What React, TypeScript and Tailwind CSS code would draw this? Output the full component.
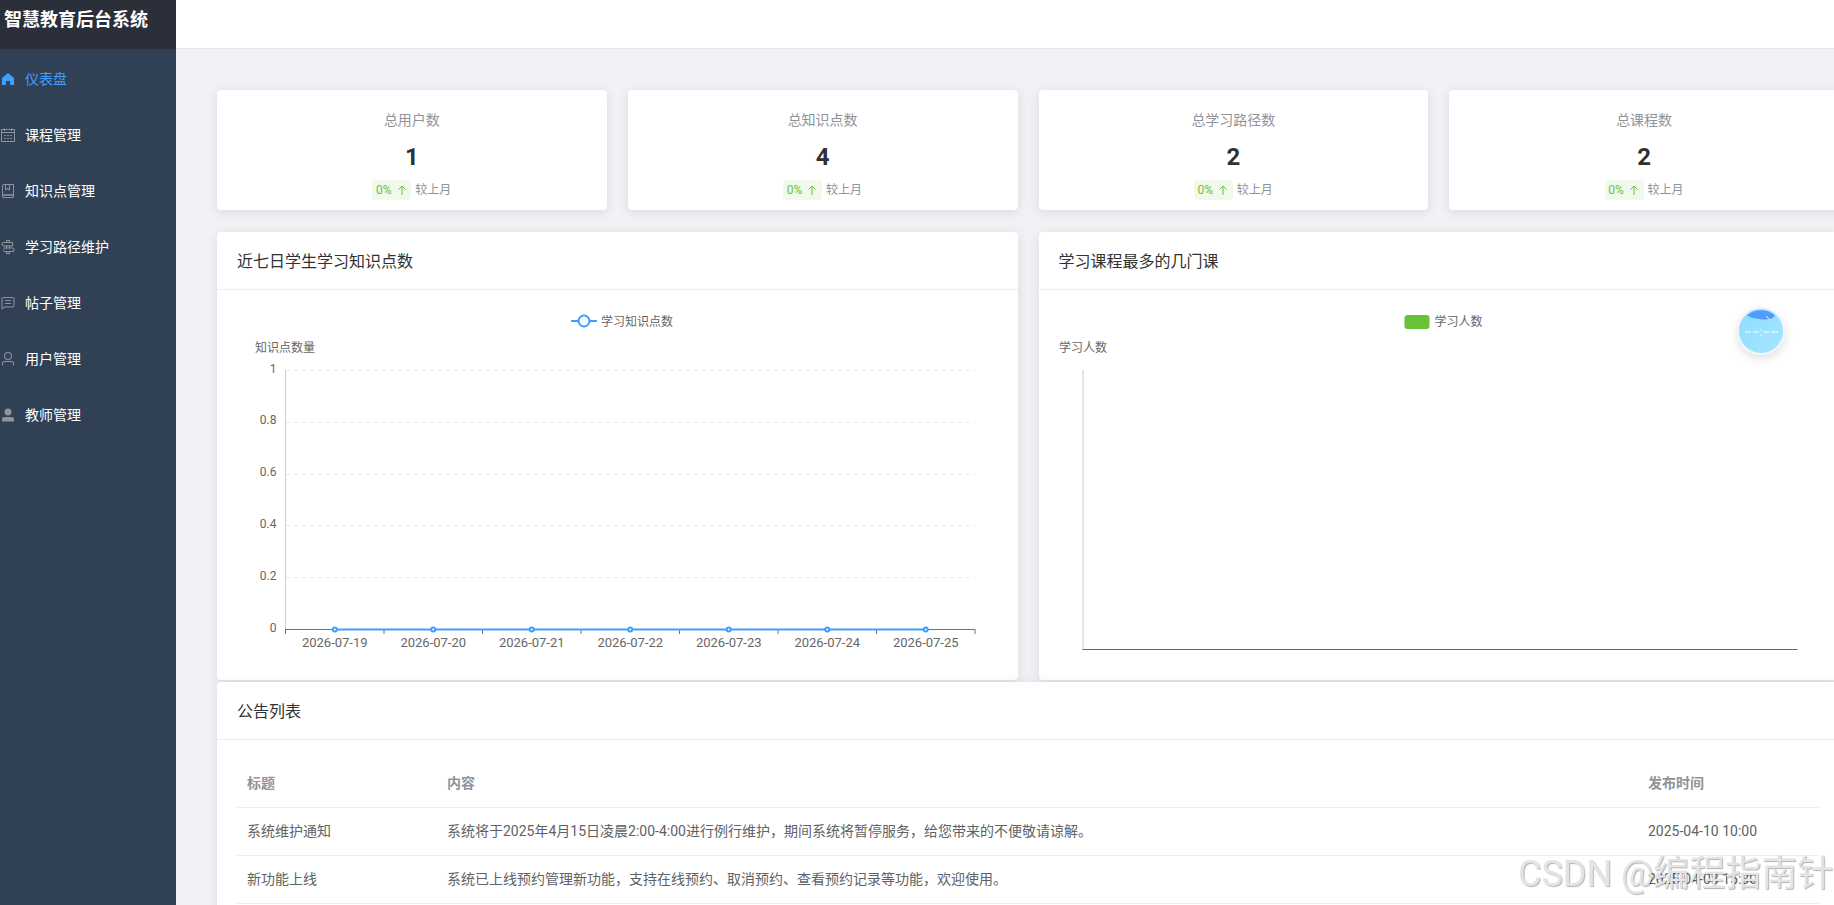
const FONT = { fontFamily: 'Roboto, "Noto Sans CJK SC", sans-serif' };

const ICONS: Record<string, string[]> = {
  home: ["M512 128 128 447.936V896h255.936V640H640v256h255.936V447.936z"],
  calendar: [
    "M128 384v512h768V192H768v32a32 32 0 1 1-64 0v-32H320v32a32 32 0 0 1-64 0v-32H128v128h768v64H128zm192-256h384V96a32 32 0 1 1 64 0v32h160a32 32 0 0 1 32 32v768a32 32 0 0 1-32 32H96a32 32 0 0 1-32-32V160a32 32 0 0 1 32-32h160V96a32 32 0 0 1 64 0v32zm-32 384h64a32 32 0 0 1 0 64h-64a32 32 0 0 1 0-64zm0 192h64a32 32 0 1 1 0 64h-64a32 32 0 1 1 0-64zm192-192h64a32 32 0 0 1 0 64h-64a32 32 0 0 1 0-64zm0 192h64a32 32 0 1 1 0 64h-64a32 32 0 1 1 0-64zm192-192h64a32 32 0 1 1 0 64h-64a32 32 0 1 1 0-64zm0 192h64a32 32 0 1 1 0 64h-64a32 32 0 1 1 0-64z",
  ],
  collection: [
    "M192 736h640V128H256a64 64 0 0 0-64 64v544zm64-672h608a32 32 0 0 1 32 32v672a32 32 0 0 1-32 32H160l-32 57.536V192A128 128 0 0 1 256 64z",
    "M240 800a48 48 0 1 0 0 96h592v-96H240zm0-64h656v160a64 64 0 0 1-64 64H240a112 112 0 0 1 0-224zm144-608v250.88l96-76.8 96 76.8V128H384zm-64-64h320v381.44a32 32 0 0 1-51.968 24.96L480 384l-108.032 86.4A32 32 0 0 1 320 445.44V64z",
  ],
  guide: [
    "M640 608h-64V416h64v192zm0 160v160a32 32 0 0 1-32 32H416a32 32 0 0 1-32-32V768h64v128h128V768h64zM384 608V416h64v192h-64zm256-352h-64V128H448v128h-64V96a32 32 0 0 1 32-32h192a32 32 0 0 1 32 32v160z",
    "m220.8 256-71.232 80 71.168 80H768V256H220.8zm-14.4-64H800a32 32 0 0 1 32 32v224a32 32 0 0 1-32 32H206.4a32 32 0 0 1-23.936-10.752l-99.584-112a32 32 0 0 1 0-42.496l99.584-112A32 32 0 0 1 206.4 192zm678.784 496-71.104 80H266.816V608h547.2l71.168 80zm-56.768-144H234.88v288h593.6a32 32 0 0 0 23.936-10.752l99.584-112a32 32 0 0 0 0-42.496l-99.584-112A32 32 0 0 0 828.48 544z",
  ],
  chat: [
    "M160 826.88 273.536 736H800a64 64 0 0 0 64-64V256a64 64 0 0 0-64-64H224a64 64 0 0 0-64 64v570.88zM296 800 147.968 918.4A32 32 0 0 1 96 893.44V256a128 128 0 0 1 128-128h576a128 128 0 0 1 128 128v416a128 128 0 0 1-128 128H296z",
    "M352 512h320q32 0 32 32t-32 32H352q-32 0-32-32t32-32zM352 320h320q32 0 32 32t-32 32H352q-32 0-32-32t32-32z",
  ],
  user: [
    "M512 512a192 192 0 1 0 0-384 192 192 0 0 0 0 384zm0 64a256 256 0 1 1 0-512 256 256 0 0 1 0 512zm320 320v-96a96 96 0 0 0-96-96H288a96 96 0 0 0-96 96v96a32 32 0 1 1-64 0v-96a160 160 0 0 1 160-160h448a160 160 0 0 1 160 160v96a32 32 0 1 1-64 0z",
  ],
  userFilled: [
    "M288 320a224 224 0 1 0 448 0 224 224 0 1 0-448 0m544 608H160a32 32 0 0 1-32-32v-96a160 160 0 0 1 160-160h448a160 160 0 0 1 160 160v96a32 32 0 0 1-32 32z",
  ],
};

const MENU = [
  { label: "仪表盘", icon: "home", active: true },
  { label: "课程管理", icon: "calendar" },
  { label: "知识点管理", icon: "collection" },
  { label: "学习路径维护", icon: "guide" },
  { label: "帖子管理", icon: "chat" },
  { label: "用户管理", icon: "user" },
  { label: "教师管理", icon: "userFilled" },
];

const STATS = [
  { label: "总用户数", value: 1 },
  { label: "总知识点数", value: 4 },
  { label: "总学习路径数", value: 2 },
  { label: "总课程数", value: 2 },
];

const NOTICES = [
  {
    title: "系统维护通知",
    content: "系统将于2025年4月15日凌晨2:00-4:00进行例行维护，期间系统将暂停服务，给您带来的不便敬请谅解。",
    time: "2025-04-10 10:00",
  },
  {
    title: "新功能上线",
    content: "系统已上线预约管理新功能，支持在线预约、取消预约、查看预约记录等功能，欢迎使用。",
    time: "2025-04-08 15:30",
  },
];

const DATES = ["2026-07-19", "2026-07-20", "2026-07-21", "2026-07-22", "2026-07-23", "2026-07-24", "2026-07-25"];
const Y_TICKS = ["1", "0.8", "0.6", "0.4", "0.2", "0"];

function MenuIcon({ name }: { name: string }) {
  return (
    <svg viewBox="0 0 1024 1024" fill="currentColor" className="w-4 h-4 shrink-0">
      {ICONS[name].map((d) => (
        <path key={d} d={d} />
      ))}
    </svg>
  );
}

function LineChart() {
  const x0 = 285.5;
  const x1 = 975;
  const step = (x1 - x0) / 7;
  return (
    <svg viewBox="217 290 800.5 390" className="block w-full h-[390px]">
      <g fontSize="12" fill="#666" style={FONT}>
        <line x1="571" x2="597" y1="321" y2="321" stroke="#409eff" strokeWidth="2" />
        <circle cx="584" cy="321" r="5.5" fill="#fff" stroke="#409eff" strokeWidth="2" />
        <text x="601" y="326">学习知识点数</text>
        <text x="255" y="352">知识点数量</text>
        {Y_TICKS.map((t, i) => {
          const y = 370 + i * 51.8;
          return (
            <g key={t}>
              {i < 5 && <line x1={x0} x2={x1} y1={Math.round(y) + 0.5} y2={Math.round(y) + 0.5} stroke="#e8e8e8" strokeDasharray="4 4" />}
              <text x={x0 - 9} y={y + 2.5} textAnchor="end">{t}</text>
            </g>
          );
        })}
        <line x1={x0} x2={x0} y1="370" y2="629" stroke="#ccc" />
        <line x1={x0} x2={x1} y1="629.5" y2="629.5" stroke="#6e7079" />
        {[...DATES, ""].map((d, i) => (
          <g key={i}>
            <line x1={x0 + i * step} x2={x0 + i * step} y1="629" y2="634" stroke="#6e7079" />
            {d && <text x={x0 + (i + 0.5) * step} y="646.5" textAnchor="middle" fontSize="13">{d}</text>}
          </g>
        ))}
        <line x1={x0 + step / 2} x2={x0 + 6.5 * step} y1="629.5" y2="629.5" stroke="#409eff" strokeWidth="2" />
        {DATES.map((d, i) => (
          <circle key={d} cx={x0 + (i + 0.5) * step} cy="629.5" r="2" fill="#fff" stroke="#409eff" strokeWidth="2" />
        ))}
      </g>
    </svg>
  );
}

function BarChart() {
  return (
    <svg viewBox="1038.5 290 800.5 390" className="block w-full h-[390px]">
      <g fontSize="12" style={FONT}>
        <rect x="1404" y="315" width="25" height="14" rx="3" fill="#67c23a" />
        <text x="1434" y="326" fill="#666">学习人数</text>
        <text x="1058.5" y="352" fill="#666">学习人数</text>
        <line x1="1082.5" x2="1082.5" y1="370" y2="649" stroke="#ccc" />
        <line x1="1082" x2="1797" y1="649.5" y2="649.5" stroke="#666" />
      </g>
    </svg>
  );
}

function Card({ title, children }: { title: string; children: React.ReactNode }) {
  return (
    <div className="bg-white rounded shadow-[0_2px_12px_rgba(0,0,0,0.1)]">
      <div className="h-[58px] px-5 pt-[2px] flex items-center border-b border-[#ebeef5] text-base text-[#303133]">{title}</div>
      {children}
    </div>
  );
}

export default function App() {
  return (
    <div className="flex h-screen overflow-hidden bg-[#f0f2f5]" style={FONT}>
      {/* Sidebar */}
      <aside className="w-[176px] shrink-0 bg-[#304156]">
        <div className="h-[49px] bg-[#2b2f3a] pl-1 pb-[9px] flex items-center text-lg leading-none font-bold text-white whitespace-nowrap">
          智慧教育后台系统
        </div>
        <nav className="pt-[2px]">
          {MENU.map((item) => (
            <div
              key={item.label}
              className={`h-14 flex items-center gap-[9px] text-sm ${item.active ? "text-[#409eff]" : "text-[#909399]"}`}
            >
              <MenuIcon name={item.icon} />
              <span className={item.active ? "text-[#409eff]" : "text-white"}>{item.label}</span>
            </div>
          ))}
        </nav>
      </aside>

      {/* Main */}
      <div className="flex-1 min-w-0 overflow-hidden">
        <div className="h-[49px] bg-white border-b border-[#e6e6e6]" />
        <div className="w-[1622px] ml-[41px] mt-[41px] flex flex-col">
          <div className="grid grid-cols-4 gap-[21px]">
            {STATS.map((s) => (
              <div
                key={s.label}
                className="h-[120px] bg-white rounded shadow-[0_2px_12px_rgba(0,0,0,0.1)] flex flex-col items-center pt-5"
              >
                <div className="text-sm leading-5 text-[#909399]">{s.label}</div>
                <div className="mt-[11px] text-2xl leading-8 font-bold text-[#303133]">{s.value}</div>
                <div className="mt-[7px] flex items-center gap-1 text-xs text-[#909399]">
                  <span className="h-5 w-[39px] flex items-center justify-center gap-1 rounded bg-[#f0f9eb] text-[#67c23a]">
                    0%
                    <svg viewBox="0 0 12 12" className="w-3 h-3" fill="none" stroke="currentColor">
                      <path d="M6 11V2M2.5 5.5 6 2l3.5 3.5" />
                    </svg>
                  </span>
                  较上月
                </div>
              </div>
            ))}
          </div>

          <div className="grid grid-cols-2 gap-[21px] mt-[22px]">
            <Card title="近七日学生学习知识点数">
              <LineChart />
            </Card>
            <Card title="学习课程最多的几门课">
              <BarChart />
            </Card>
          </div>

          <div className="mt-[2px]">
            <Card title="公告列表">
              <div className="px-5 pt-[19px] pb-5">
                <table className="w-full text-sm text-[#606266] table-fixed">
                  <thead>
                    <tr className="h-12 border-b border-[#ebeef5] text-left text-[#909399]">
                      <th className="w-[200px] pl-[10px] font-bold">标题</th>
                      <th className="pl-[10px] font-bold">内容</th>
                      <th className="w-[181px] pl-[10px] font-bold">发布时间</th>
                    </tr>
                  </thead>
                  <tbody>
                    {NOTICES.map((n) => (
                      <tr key={n.title} className="h-12 border-b border-[#ebeef5]">
                        <td className="pl-[10px]">{n.title}</td>
                        <td className="pl-[10px]">{n.content}</td>
                        <td className="pl-[10px]">{n.time}</td>
                      </tr>
                    ))}
                  </tbody>
                </table>
              </div>
            </Card>
          </div>
        </div>
      </div>

      {/* Floating ball */}
      <div className="fixed left-[1737px] top-[307px] w-12 h-12 rounded-full shadow-[0_4px_10px_rgba(0,0,0,0.12)]">
        <svg viewBox="0 0 48 48" className="w-12 h-12">
          <defs>
            <linearGradient id="ball" x1="0" y1="0" x2="1" y2="1">
              <stop offset="0" stopColor="#8fdcff" />
              <stop offset="1" stopColor="#a6e6ff" />
            </linearGradient>
          </defs>
          <circle cx="24" cy="24" r="23" fill="url(#ball)" stroke="#eef5fb" strokeWidth="2" />
          <path d="M10 8.5A21 21 0 0 1 38 8.5Q36 13 26 12.5Q16 12 10 8.5z" fill="#4f9bff" />
          <path d="M8 25h6M16 25h6M26 25h6M34 25h7" stroke="#fff" strokeWidth="1" />
          <path d="M24 22v2M24 27v2M29 9l5 5" stroke="#e6f5ff" strokeWidth="1" />
        </svg>
      </div>

      {/* Watermark */}
      <div className="fixed left-[1518px] top-[850px] text-[36px] leading-[48px] whitespace-nowrap text-[#e4e4e4] [text-shadow:1px_1px_1px_rgba(0,0,0,0.3)] pointer-events-none">
        CSDN @编程指南针
      </div>
    </div>
  );
}
